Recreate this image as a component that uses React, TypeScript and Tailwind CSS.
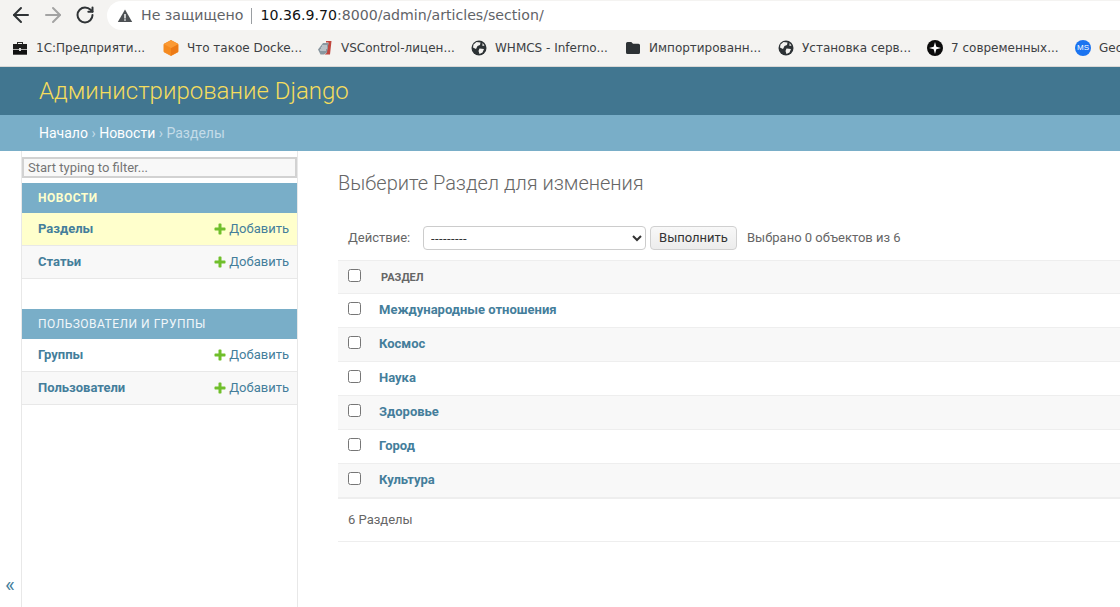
import { ArrowLeft, ArrowRight, RotateCw } from "lucide-react";
import type { ReactNode } from "react";

const Globe = () => (
  <svg width="16" height="16" viewBox="0 0 16 16" className="shrink-0">
    <circle cx="8" cy="8" r="7.5" fill="#2d3235" />
    <path d="M5.500 2 9.500 2.500 9 5 6.500 6 5 9 2 7.500 2.500 4.500zM8.500 8.500l4.500.5-1.500 3.500L8.500 14l-1-3zM11.500 3l2 2.500-2 .5z" fill="#f4f3f1" />
  </svg>
);

const bookmarks: { icon: ReactNode; label: string; width: string }[] = [
  {
    label: "1С:Предприяти...",
    width: "w-[151px]",
    icon: (
      <svg width="16" height="16" viewBox="0 0 16 16">
        <path d="M5 4V2h6v2h-1V3H6v1z" fill="#2b2b2b" />
        <rect x="1" y="4" width="14" height="5" fill="#1c1c1c" />
        <rect x="1" y="9.700" width="14" height="5" fill="#111111" />
        <rect x="7" y="8" width="2" height="3" fill="#d8d8d8" />
      </svg>
    ),
  },
  {
    label: "Что такое Docke...",
    width: "w-[154px]",
    icon: (
      <svg width="16" height="16" viewBox="0 0 16 16">
        <path d="M8 .5 15 4.200v7.600l-7 3.700-7-3.700V4.200z" fill="#f58a1f" stroke="#f58a1f" strokeLinejoin="round" />
        <path d="M8 8v7.500l7-3.700V4.200z" fill="#ec7a16" />
        <path d="M8 .5 15 4.200 8 8 1 4.200z" fill="#fb9a34" />
      </svg>
    ),
  },
  {
    label: "VSControl-лицен...",
    width: "w-[154px]",
    icon: (
      <svg width="16" height="16" viewBox="0 0 16 16">
        <path d="M9 1h5.500L13 14.500H7.500L9.500 13l2-10.500H9z" fill="#c0473f" />
        <path d="M1 9.500 6 3h5.500L10 12.500l-3 2H3.500z" fill="#8a97a0" />
        <path d="M3 10h6M4 8h6M5 6h5" stroke="#e7ecef" strokeWidth="1" />
      </svg>
    ),
  },
  { label: "WHMCS - Inferno...", width: "w-[154px]", icon: <Globe /> },
  {
    label: "Импортированн...",
    width: "w-[153px]",
    icon: (
      <svg width="16" height="16" viewBox="0 0 16 16">
        <path d="M1 3.500A1.500 1.500 0 0 1 2.500 2h3.800L8 3.700h5.500A1.500 1.500 0 0 1 15 5.200v7.300a1.500 1.500 0 0 1-1.500 1.500h-11A1.500 1.500 0 0 1 1 12.500z" fill="#2d3235" />
      </svg>
    ),
  },
  { label: "Установка серв...", width: "w-[149px]", icon: <Globe /> },
  {
    label: "7 современных...",
    width: "w-[148px]",
    icon: (
      <svg width="16" height="16" viewBox="0 0 16 16">
        <circle cx="8" cy="8" r="8" fill="#0b0b0b" />
        <path d="M8 2 9.300 6.700 14 8 9.300 9.300 8 14 6.700 9.300 2 8 6.700 6.700z" fill="#fff" />
      </svg>
    ),
  },
  {
    label: "Geo",
    width: "w-[60px]",
    icon: (
      <div className="w-4 h-4 shrink-0 rounded-full bg-[#1a73f0] flex items-center justify-center text-white text-[8px] font-['Liberation_Sans',sans-serif]">
        MS
      </div>
    ),
  },
];

const AddLink = () => (
  <a className="flex items-center gap-[2px] text-[13px] text-[#447e9b]">
    <svg width="14" height="14" viewBox="0 0 1792 1792">
      <path
        fill="#70bf2b"
        d="M1600 796v192q0 40-28 68t-68 28h-416v416q0 40-28 68t-68 28h-192q-40 0-68-28t-28-68v-416h-416q-40 0-68-28t-28-68v-192q0-40 28-68t68-28h416v-416q0-40 28-68t68-28h192q40 0 68 28t28 68v416h416q40 0 68 28t28 68z"
      />
    </svg>
    Добавить
  </a>
);

const SideRow = ({ label, className }: { label: string; className: string }) => (
  <div className={`h-[33px] pl-4 pr-2 flex items-center justify-between border-b border-[#e8e8e8] ${className}`}>
    <span className="text-[13px] font-bold text-[#447e9b]">{label}</span>
    <AddLink />
  </div>
);

const sections = ["Международные отношения", "Космос", "Наука", "Здоровье", "Город", "Культура"];

export default function App() {
  return (
    <div className="w-[1120px] h-[607px] overflow-hidden flex flex-col bg-white font-['Roboto',sans-serif]">
      {/* Browser toolbar */}
      <div className="h-[30px] shrink-0 bg-[#f4f3f1] flex items-center">
        <div className="flex items-center pl-[9px] w-[107px] shrink-0">
          <ArrowLeft size={24} strokeWidth={2} className="text-[#2f3336]" />
          <ArrowRight size={24} strokeWidth={2} className="ml-[8px] text-[#a3a3a3]" />
          <RotateCw size={20} strokeWidth={2.4} className="ml-[10px] text-[#2f3336]" />
        </div>
        <div className="flex-1 self-end h-[29px] bg-white rounded-l-full flex items-center pl-[10px] font-['DejaVu_Sans',sans-serif] text-[14.15px]">
          <svg width="16" height="16" viewBox="0 0 16 16">
            <path d="M8 1.500 15.200 14H.8z" fill="#4d5154" />
            <path d="M7.300 6h1.400v4.500H7.300zM7.300 11.300h1.400v1.400H7.300z" fill="#fff" />
          </svg>
          <span className="ml-[8px] text-[#5f6368]">Не защищено</span>
          <span className="w-px h-[16px] mx-[8px] bg-[#9a9ea2]" />
          <span className="text-[#101214]">10.36.9.70</span>
          <span className="text-[#5f6368]">:8000/admin/articles/section/</span>
        </div>
      </div>

      {/* Bookmarks bar */}
      <div className="h-[37px] shrink-0 bg-[#f4f3f1] border-b border-[#d9d8d6] flex items-center pl-[12px] font-['DejaVu_Sans',sans-serif] text-[12px] text-[#3c4043] whitespace-nowrap">
        {bookmarks.map((b) => (
          <div key={b.label} className={`${b.width} shrink-0 flex items-center gap-[8px]`}>
            {b.icon}
            <span>{b.label}</span>
          </div>
        ))}
      </div>

      {/* Django header */}
      <div className="h-[48px] shrink-0 bg-[#417690] flex items-center pl-[39px] text-[24px] font-light text-[#f5dd5d]">
        Администрирование Django
      </div>
      <div className="h-[36px] shrink-0 bg-[#79aec8] flex items-center pl-[39px] text-[14px] text-[#c4dce8]">
        <span className="text-white">Начало</span>
        <span className="mx-[3.5px]">›</span>
        <span className="text-white">Новости</span>
        <span className="mx-[3.5px]">›</span>
        <span>Разделы</span>
      </div>

      <div className="flex-1 flex min-h-0">
        {/* Sidebar toggle */}
        <div className="w-[22px] shrink-0 border-r border-[#e8e8e8] flex flex-col justify-end pb-[8px] pl-[5px] text-[21px] leading-[28px] text-[#447e9b]">
          «
        </div>

        {/* Sidebar */}
        <div className="w-[276px] shrink-0 border-r border-[#e8e8e8] pt-[6px]">
          <input
            type="text"
            placeholder="Start typing to filter..."
            className="block w-[275px] h-[21px] px-[4px] border-2 border-[#d2d2d2] bg-[#f8f8f8] text-[13px] placeholder:text-[#757575] outline-none"
          />
          <div className="mt-[5px] h-[30px] bg-[#79aec8] pl-4 flex items-center text-[12px] font-bold tracking-[0.5px] text-[#ffffcc]">
            НОВОСТИ
          </div>
          <SideRow label="Разделы" className="bg-[#ffffcc]" />
          <SideRow label="Статьи" className="bg-[#f8f8f8]" />
          <div className="mt-[30px] h-[30px] bg-[#79aec8] pl-4 flex items-center text-[12px] tracking-[0.5px] text-[#f2f7fa]">
            ПОЛЬЗОВАТЕЛИ И ГРУППЫ
          </div>
          <SideRow label="Группы" className="bg-white" />
          <SideRow label="Пользователи" className="bg-[#f8f8f8]" />
        </div>

        {/* Content */}
        <div className="flex-1 pl-[40px] min-w-0">
          <h1 className="mt-[20px] h-[24px] leading-[24px] text-[20px] font-light text-[#666666]">
            Выберите Раздел для изменения
          </h1>
          <div className="mt-[31px] h-[24px] pl-[10px] flex items-center text-[13px] text-[#666666]">
            <span className="w-[75px]">Действие:</span>
            <select className="w-[223px] h-[24px] pl-[3px] bg-white border border-[#cccccc] rounded-[4px] text-[13px] tracking-[0.4px] text-[#333333] outline-none">
              <option>---------</option>
            </select>
            <button className="ml-[4px] w-[87px] h-[24px] bg-linear-to-b from-[#f8f8f8] to-[#ececec] border border-[#d0d0d0] rounded-[4px] text-[13px] text-[#333333]">
              Выполнить
            </button>
            <span className="ml-[10px]">Выбрано 0 объектов из 6</span>
          </div>
          <div className="mt-[10px]">
            <div className="h-[34px] pl-[10px] flex items-start bg-[#f8f8f8] border-y border-[#eeeeee]">
              <input type="checkbox" className="w-[13px] h-[13px] m-0 mt-[8px]" />
              <span className="ml-[20px] mt-[9px] leading-[16px] text-[11px] font-bold text-[#666666]">РАЗДЕЛ</span>
            </div>
            {sections.map((s, i) => (
              <div
                key={s}
                className={`h-[34px] pl-[10px] flex items-start border-b border-[#eeeeee] ${i % 2 ? "bg-[#f8f8f8]" : "bg-white"}`}
              >
                <input type="checkbox" className="w-[13px] h-[13px] m-0 mt-[8px]" />
                <span className="ml-[18px] mt-[8px] leading-[16px] text-[13px] font-bold text-[#447e9b]">{s}</span>
              </div>
            ))}
            <div className="h-[44px] pl-[10px] flex items-center border-t border-b border-[#eeeeee] text-[13px] text-[#666666]">
              6 Разделы
            </div>
          </div>
        </div>
      </div>
    </div>
  );
}
